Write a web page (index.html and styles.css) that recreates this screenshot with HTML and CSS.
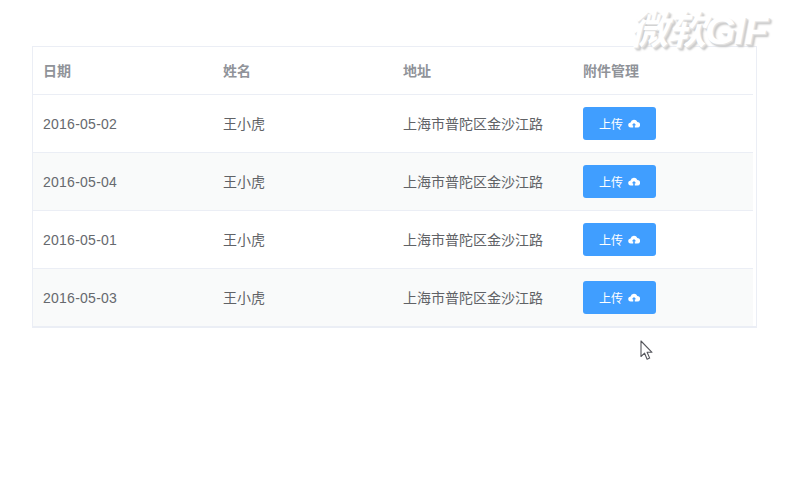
FILE: index.html
```html
<!DOCTYPE html>
<html lang="zh-CN">
<head>
<meta charset="utf-8">
<title>附件管理</title>
<link rel="stylesheet" href="styles.css">
</head>
<body>
<div class="watermark">微软GIF</div>
<main class="page">
  <div class="table-box">
    <table class="table">
      <thead>
        <tr><th>日期</th><th>姓名</th><th>地址</th><th>附件管理</th></tr>
      </thead>
      <tbody>
        <tr><td class="date">2016-05-02</td><td>王小虎</td><td>上海市普陀区金沙江路</td><td><button class="btn">上传<svg class="cloud" viewBox="0 0 12 9"><path d="M3 8.6a2.6 2.6 0 0 1-.4-5.2A3.5 3.5 0 0 1 9.3 3a2.8 2.8 0 0 1 0 5.6H6.8V6.2h1.4L6 3.9 3.8 6.2h1.4v2.4z"/></svg></button></td></tr>
        <tr class="alt"><td class="date">2016-05-04</td><td>王小虎</td><td>上海市普陀区金沙江路</td><td><button class="btn">上传<svg class="cloud" viewBox="0 0 12 9"><path d="M3 8.6a2.6 2.6 0 0 1-.4-5.2A3.5 3.5 0 0 1 9.3 3a2.8 2.8 0 0 1 0 5.6H6.8V6.2h1.4L6 3.9 3.8 6.2h1.4v2.4z"/></svg></button></td></tr>
        <tr><td class="date">2016-05-01</td><td>王小虎</td><td>上海市普陀区金沙江路</td><td><button class="btn">上传<svg class="cloud" viewBox="0 0 12 9"><path d="M3 8.6a2.6 2.6 0 0 1-.4-5.2A3.5 3.5 0 0 1 9.3 3a2.8 2.8 0 0 1 0 5.6H6.8V6.2h1.4L6 3.9 3.8 6.2h1.4v2.4z"/></svg></button></td></tr>
        <tr class="alt"><td class="date">2016-05-03</td><td>王小虎</td><td>上海市普陀区金沙江路</td><td><button class="btn">上传<svg class="cloud" viewBox="0 0 12 9"><path d="M3 8.6a2.6 2.6 0 0 1-.4-5.2A3.5 3.5 0 0 1 9.3 3a2.8 2.8 0 0 1 0 5.6H6.8V6.2h1.4L6 3.9 3.8 6.2h1.4v2.4z"/></svg></button></td></tr>
      </tbody>
    </table>
  </div>
</main>
<svg class="cursor" viewBox="0 0 14 21"><path d="M1 1v15.5l3.6-3.3 2.5 6 2.6-1.1-2.6-5.8H12z" fill="#fff" stroke="#55565c" stroke-width="1.1" stroke-linejoin="round"/></svg>
</body>
</html>
```
FILE: styles.css
```css
* { box-sizing: border-box; }
html, body { margin: 0; background: #fff; }
body {
  font-family: "Liberation Sans", "Noto Sans CJK SC", sans-serif;
  font-size: 14px;
  color: #606266;
}
.page { padding: 46px 29px 0 32px; }
.table-box {
  width: 725px;
  border: 1px solid #ebeef5;
  border-bottom-width: 2px;
  padding-right: 3px;
}
.table {
  width: 720px;
  table-layout: fixed;
  border-collapse: collapse;
}
th, td {
  width: 180px;
  padding: 0 10px;
  text-align: left;
  border-bottom: 1px solid #ebeef5;
}
th { height: 47px; padding-bottom: 1px; color: #909399; font-size: 14px; font-weight: 700; }
td { height: 58px; }
td.date { padding-top: 2px; letter-spacing: .25px; color: #66696e; }
tbody tr:last-child td { border-bottom: 0; }
.alt td { background: #f9fafa; }
.btn {
  display: flex;
  align-items: center;
  justify-content: center;
  gap: 5px;
  width: 73px;
  height: 33px;
  padding: 0;
  border: 0;
  border-radius: 3px;
  background: #409eff;
  color: #fff;
  font: 12px "Liberation Sans", "Noto Sans CJK SC", sans-serif;
}
.cloud { width: 12px; height: 9px; fill: #fff; }
.watermark {
  position: absolute;
  top: 10px;
  left: 629px;
  font: italic 700 39px/1.1 "Liberation Sans", "Noto Sans CJK SC", sans-serif;
  letter-spacing: -1px;
  color: #fff;
  text-shadow: 1px 1px 0 #e4e4e4, 2px 2px 1px #d4d4d4, 3px 3px 2px #c4c4c4;
}
.cursor { position: absolute; left: 640px; top: 340px; width: 14px; height: 21px; }
```
